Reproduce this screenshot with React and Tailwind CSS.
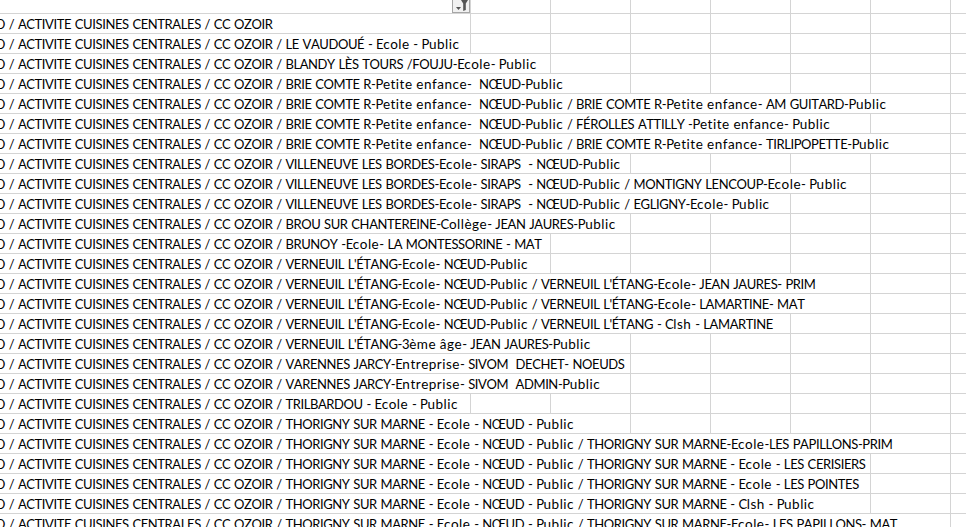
const P = "NŒUD / ACTIVITE CUISINES CENTRALES / CC OZOIR";
const BC = P + " / BRIE COMTE R-Petite enfance-  NŒUD-Public";
const VB = P + " / VILLENEUVE LES BORDES-Ecole- SIRAPS  - NŒUD-Public";
const VE = P + " / VERNEUIL L'ÉTANG-Ecole- NŒUD-Public";
const TH = P + " / THORIGNY SUR MARNE - Ecole - NŒUD - Public";

const ROWS = [
  [P, 1],
  [P + " / LE VAUDOUÉ - Ecole - Public", 1],
  [P + " / BLANDY LÈS TOURS /FOUJU-Ecole- Public", 2],
  [BC, 3],
  [BC + " / BRIE COMTE R-Petite enfance- AM GUITARD-Public", 7],
  [BC + " / FÉROLLES ATTILLY -Petite enfance- Public", 6],
  [BC + " / BRIE COMTE R-Petite enfance- TIRLIPOPETTE-Public", 7],
  [VB, 3],
  [VB + " / MONTIGNY LENCOUP-Ecole- Public", 6],
  [VB + " / EGLIGNY-Ecole- Public", 5],
  [P + " / BROU SUR CHANTEREINE-Collège- JEAN JAURES-Public", 3],
  [P + " / BRUNOY -Ecole- LA MONTESSORINE - MAT", 2],
  [VE, 2],
  [VE + " / VERNEUIL L'ÉTANG-Ecole- JEAN JAURES- PRIM", 6],
  [VE + " / VERNEUIL L'ÉTANG-Ecole- LAMARTINE- MAT", 6],
  [VE + " / VERNEUIL L'ÉTANG - Clsh - LAMARTINE", 5],
  [P + " / VERNEUIL L'ÉTANG-3ème âge- JEAN JAURES-Public", 3],
  [P + " / VARENNES JARCY-Entreprise- SIVOM  DECHET- NOEUDS", 3],
  [P + " / VARENNES JARCY-Entreprise- SIVOM  ADMIN-Public", 3],
  [P + " / TRILBARDOU - Ecole - Public", 1],
  [TH, 3],
  [TH + " / THORIGNY SUR MARNE-Ecole-LES PAPILLONS-PRIM", 7],
  [TH + " / THORIGNY SUR MARNE - Ecole - LES CERISIERS", 6],
  [TH + " / THORIGNY SUR MARNE - Ecole - LES POINTES", 6],
  [TH + " / THORIGNY SUR MARNE - Clsh - Public", 6],
  [TH + " / THORIGNY SUR MARNE-Ecole- LES PAPILLONS- MAT", 7],
];

const SPAN = {
  1: "col-span-1",
  2: "col-span-2",
  3: "col-span-3",
  4: "col-span-4",
  5: "col-span-5",
  6: "col-span-6",
  7: "col-span-7",
};

const GRID = "grid grid-cols-[471px_repeat(6,80px)_15px] border-b border-[#d4d4d4]";
const CELL = "border-r border-[#d4d4d4] last:border-r-0";

function CellText({ text }) {
  const parts = text.split(/([a-zàâèé]+)/);
  return (
    <div className="ml-[-37px] whitespace-pre text-[13px] leading-[20px] tracking-[-0.4px] [word-spacing:0.8px] [font-kerning:none] text-black">
      {parts.map((p, i) =>
        i % 2 === 1 ? (
          <span key={i} className="text-[13.5px] tracking-[0.5px]">
            {p}
          </span>
        ) : (
          p
        )
      )}
    </div>
  );
}

function Row({ text, span }) {
  const empties = Array.from({ length: 8 - span });
  return (
    <div className={`${GRID} h-[20px]`}>
      <div className={`${SPAN[span]} ${CELL}`}>
        <CellText text={text} />
      </div>
      {empties.map((_, i) => (
        <div key={i} className={CELL} />
      ))}
    </div>
  );
}

function FilterIcon() {
  return (
    <svg width="18" height="13" viewBox="0 0 18 13" className="block">
      <rect x="0.5" y="-2" width="17" height="14.5" fill="#f1f1f1" stroke="#a6a6a6" />
      <path d="M9 0h7l-2.2 3.5V10l-2.6 1V3.5z" fill="#555" />
      <path d="M4 7h5L6.5 10z" fill="#555" />
    </svg>
  );
}

export default function App() {
  return (
    <div className="h-[527px] w-[966px] overflow-hidden bg-white font-['Lato',sans-serif]">
      <div className={`${GRID} h-[14px]`}>
        <div className={`${CELL} flex justify-end`}>
          <FilterIcon />
        </div>
        {Array.from({ length: 7 }).map((_, i) => (
          <div key={i} className={CELL} />
        ))}
      </div>
      {ROWS.map(([text, span], i) => (
        <Row key={i} text={text} span={span} />
      ))}
    </div>
  );
}
